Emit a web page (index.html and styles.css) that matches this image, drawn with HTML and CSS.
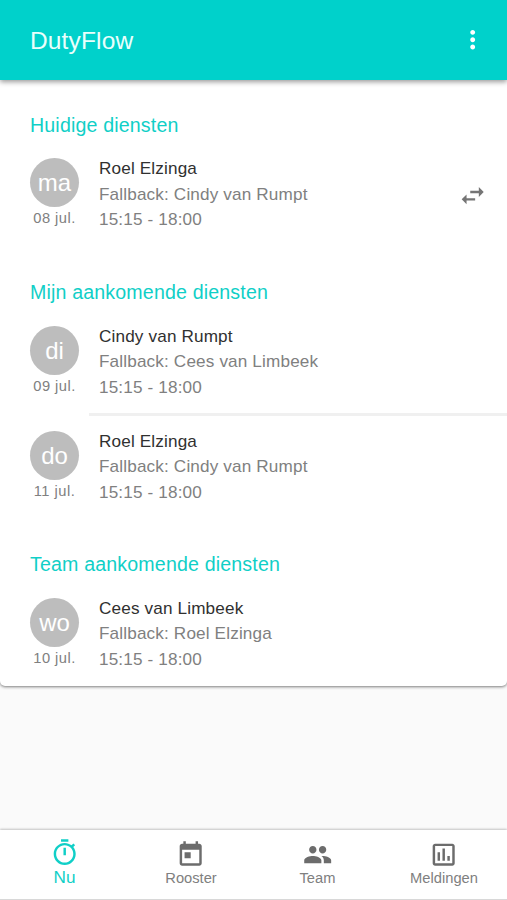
FILE: index.html
```html
<!DOCTYPE html>
<html lang="nl">
<head>
<meta charset="utf-8">
<title>DutyFlow</title>
<link rel="stylesheet" href="styles.css">
</head>
<body>
<header class="bar">
  <h1 class="bar-title">DutyFlow</h1>
  <svg class="icon" viewBox="0 0 24 24"><path d="M12 8c1.1 0 2-.9 2-2s-.9-2-2-2-2 .9-2 2 .9 2 2 2zm0 2c-1.1 0-2 .9-2 2s.9 2 2 2 2-.9 2-2-.9-2-2-2zm0 6c-1.1 0-2 .9-2 2s.9 2 2 2 2-.9 2-2-.9-2-2-2z"/></svg>
</header>
<main class="card">
  <section class="group">
    <h2 class="heading">Huidige diensten</h2>
    <article class="duty">
      <div class="day"><div class="avatar">ma</div><div class="date">08 jul.</div></div>
      <div class="info"><p class="name">Roel Elzinga</p><p>Fallback: Cindy van Rumpt</p><p>15:15 - 18:00</p></div>
      <svg class="icon swap" viewBox="0 0 24 24"><path d="M6.99 11L3 15l3.99 4v-3H14v-2H6.99v-3zM21 9l-3.99-4v3H10v2h7.01v3L21 9z"/></svg>
    </article>
  </section>
  <section class="group">
    <h2 class="heading">Mijn aankomende diensten</h2>
    <article class="duty">
      <div class="day"><div class="avatar">di</div><div class="date">09 jul.</div></div>
      <div class="info"><p class="name">Cindy van Rumpt</p><p>Fallback: Cees van Limbeek</p><p>15:15 - 18:00</p></div>
    </article>
    <div class="divider"></div>
    <article class="duty">
      <div class="day"><div class="avatar">do</div><div class="date">11 jul.</div></div>
      <div class="info"><p class="name">Roel Elzinga</p><p>Fallback: Cindy van Rumpt</p><p>15:15 - 18:00</p></div>
    </article>
  </section>
  <section class="group">
    <h2 class="heading">Team aankomende diensten</h2>
    <article class="duty">
      <div class="day"><div class="avatar">wo</div><div class="date">10 jul.</div></div>
      <div class="info"><p class="name">Cees van Limbeek</p><p>Fallback: Roel Elzinga</p><p>15:15 - 18:00</p></div>
    </article>
  </section>
</main>
<nav class="nav">
  <a class="tab active"><svg class="icon" viewBox="0 0 24 24"><path d="M15 1H9v2h6V1zm-4 13h2V8h-2v6zm8.03-6.61l1.42-1.42c-.43-.51-.9-.99-1.41-1.41l-1.42 1.42C16.07 4.74 14.12 4 12 4c-4.97 0-9 4.03-9 9s4.02 9 9 9 9-4.03 9-9c0-2.12-.74-4.07-1.97-5.61zM12 20c-3.87 0-7-3.13-7-7s3.13-7 7-7 7 3.13 7 7-3.13 7-7 7z"/></svg><span>Nu</span></a>
  <a class="tab"><svg class="icon" viewBox="0 0 24 24"><path d="M19 3h-1V1h-2v2H8V1H6v2H5c-1.11 0-1.99.9-1.99 2L3 19c0 1.1.89 2 2 2h14c1.1 0 2-.9 2-2V5c0-1.1-.9-2-2-2zm0 16H5V8h14v11zM7 10h5v5H7z"/></svg><span>Rooster</span></a>
  <a class="tab"><svg class="icon" viewBox="0 0 24 24"><path d="M16 11c1.66 0 2.99-1.34 2.99-3S17.66 5 16 5c-1.66 0-3 1.34-3 3s1.34 3 3 3zm-8 0c1.66 0 2.99-1.34 2.99-3S9.66 5 8 5C6.34 5 5 6.34 5 8s1.34 3 3 3zm0 2c-2.33 0-7 1.17-7 3.5V19h14v-2.5c0-2.33-4.67-3.5-7-3.5zm8 0c-.29 0-.62.02-.97.05 1.16.84 1.97 1.97 1.97 3.45V19h6v-2.5c0-2.33-4.67-3.5-7-3.5z"/></svg><span>Team</span></a>
  <a class="tab"><svg class="icon" viewBox="0 0 24 24"><path d="M9 17H7v-7h2v7zm4 0h-2V7h2v10zm4 0h-2v-4h2v4zm2 2H5V5h14v14zm0-16H5c-1.1 0-2 .9-2 2v14c0 1.1.9 2 2 2h14c1.1 0 2-.9 2-2V5c0-1.1-.9-2-2-2z"/></svg><span>Meldingen</span></a>
</nav>
</body>
</html>
```
FILE: styles.css
```css
* { box-sizing: border-box; margin: 0; padding: 0; }
body {
  height: 900px;
  display: flex;
  flex-direction: column;
  overflow: hidden;
  background: #fafafa;
  font-family: "Liberation Sans", Arial, sans-serif;
  color: #808080;
}
.icon { width: 29.4px; height: 29.4px; flex: none; fill: currentColor; }
.bar {
  position: relative;
  z-index: 1;
  flex: none;
  height: 79.5px;
  padding: 0 20px 0 30px;
  display: flex;
  align-items: center;
  justify-content: space-between;
  background: #00d1cb;
  color: #fff;
  box-shadow: 0 2px 5px rgba(0, 0, 0, .4);
}
.bar-title { font-size: 24.5px; font-weight: 400; letter-spacing: .15px; color: #e9fffc; padding-top: 2px; }
.card {
  flex: none;
  height: 606.5px;
  background: #fff;
  border-radius: 0 0 5px 5px;
  box-shadow: 0 1px 3px rgba(0, 0, 0, .5);
}
.group { padding-top: 30px; height: 167.5px; }
.group:nth-child(2) { height: 272px; }
.heading { font-size: 19.6px; line-height: 30px; font-weight: 400; letter-spacing: .16px; color: #10cfc7; padding-left: 30px; }
.duty { display: flex; padding: 16.5px 20px 0 30px; height: 93.5px; }
.day { width: 49px; margin: 2.4px 20px 0 0; flex: none; }
.avatar {
  width: 49px;
  height: 49px;
  border-radius: 50%;
  background: #bdbdbd;
  color: #fff;
  font-size: 24px;
  line-height: 50px;
  text-align: center;
}
.date { font-size: 14.7px; line-height: 22px; letter-spacing: .47px; text-align: center; white-space: nowrap; }
.info { flex: 1; font-size: 17.15px; line-height: 25.6px; letter-spacing: .15px; }
.name { color: #303030; }
.swap { margin: 25px -.5px 0 0; color: #757575; }
.divider { height: 3px; margin: 12px 0 -3.5px 89px; background: #f0f0f0; }
.nav {
  margin-top: auto;
  height: 70px;
  display: flex;
  background: #fff;
  border-bottom: 1px solid #d8d8d8;
  box-shadow: 0 -1px 2px rgba(0, 0, 0, .22);
}
.tab {
  flex: 1;
  display: flex;
  flex-direction: column;
  align-items: center;
  padding: 9.5px 0 0 .5px;
  font-size: 14.7px;
  line-height: 18px;
}
.tab .icon { color: #6c6c6c; }
.active { padding: 7.5px 0 0 1.5px; font-size: 17.15px; line-height: 20px; color: #10cfc7; }
.active .icon { color: #10cfc7; }
```
